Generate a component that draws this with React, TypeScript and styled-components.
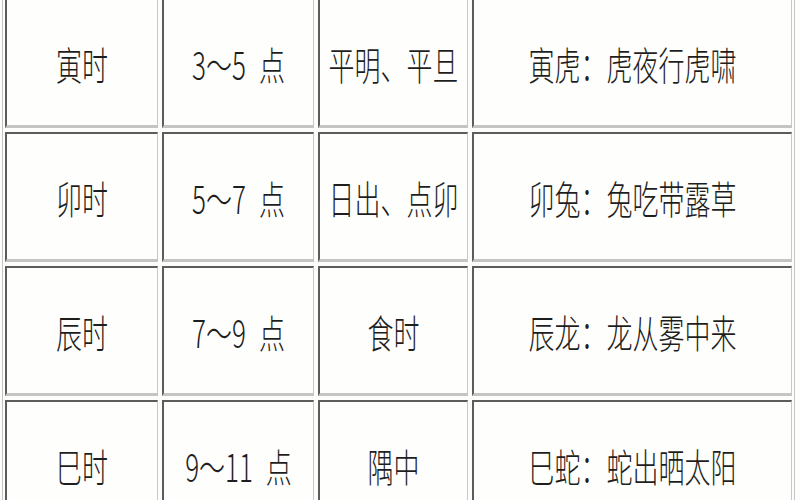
import styled, { createGlobalStyle } from 'styled-components';

const GlobalStyle = createGlobalStyle`
  body {
    margin: 0;
    background: #fdfdfc;
  }
`;

const Page = styled.div`
  width: 800px;
  height: 500px;
  overflow: hidden;
  background: #fdfdfc;
`;

const Table = styled.div`
  display: grid;
  grid-template-columns: 153px 152px 150px 320px;
  grid-auto-rows: 130px;
  gap: 4px;
  width: fit-content;
  margin: -4px 0 0 2px;
  padding: 2px;
  border-left: 1px solid #c4c4c4;
  border-right: 1px solid #c4c4c4;
`;

const Cell = styled.div`
  box-sizing: border-box;
  display: flex;
  align-items: center;
  justify-content: center;
  border-style: solid;
  border-width: 2px 1px 3px 2px;
  border-color: #5c5c5c #c8c8c8 #c4c4c4 #5c5c5c;
  background: #fefefd;
`;

const Label = styled.span`
  display: inline-block;
  font-family: 'Noto Sans CJK SC', 'Liberation Serif', serif;
  font-weight: 300;
  font-size: 26px;
  line-height: 1;
  color: #1e1e1e;
  white-space: pre;
  transform: scaleY(1.5);
`;

const rows: string[][] = [
  ['寅时', '3～5\u2002点', '平明、平旦', '寅虎：虎夜行虎啸'],
  ['卯时', '5～7\u2002点', '日出、点卯', '卯兔：兔吃带露草'],
  ['辰时', '7～9\u2002点', '食时', '辰龙：龙从雾中来'],
  ['巳时', '9～11\u2002点', '隅中', '巳蛇：蛇出晒太阳'],
];

export default function App() {
  return (
    <Page>
      <GlobalStyle />
      <Table>
        {rows.map((row) =>
          row.map((text, i) => (
            <Cell key={row[0] + i}>
              <Label>{text}</Label>
            </Cell>
          )),
        )}
      </Table>
    </Page>
  );
}
